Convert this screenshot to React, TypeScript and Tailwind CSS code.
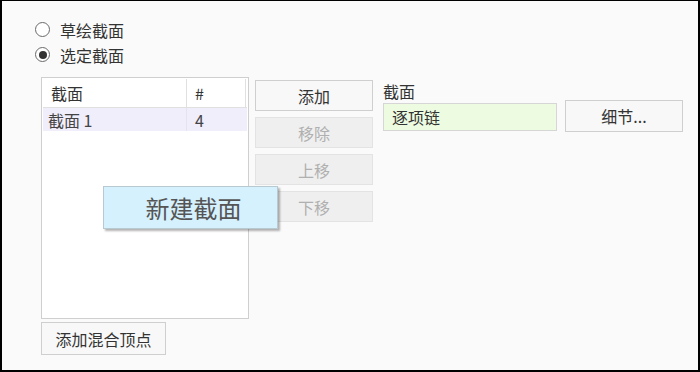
import React from "react";

const font = { fontFamily: '"Noto Sans CJK SC", "Noto Sans", sans-serif' };

function Radio({ label, checked }: { label: string; checked?: boolean }) {
  return (
    <div className="flex items-center h-[25px]">
      <span className="w-[15px] h-[15px] rounded-full border border-[#6a6a6a] bg-white flex items-center justify-center">
        {checked && <span className="w-[8px] h-[8px] rounded-full bg-[#333]" />}
      </span>
      <span className="ml-[10px] text-[16px] text-[#333]">{label}</span>
    </div>
  );
}

function Btn({ label, disabled, className = "" }: { label: string; disabled?: boolean; className?: string }) {
  return (
    <div
      className={
        "flex items-center justify-center border text-[16px] " +
        (disabled
          ? "bg-[#efefef] border-[#e3e3e3] text-[#b0b0b0] "
          : "bg-[#f8f8f8] border-[#cfcfcf] text-[#333] ") +
        className
      }
    >
      {label}
    </div>
  );
}

export default function App() {
  return (
    <div
      style={font}
      className="relative w-[700px] h-[372px] bg-[#fafafa] border-black border-t border-x-2 border-b-2 overflow-hidden"
    >
      <div className="pl-[33px] pt-[16px]">
        <Radio label="草绘截面" />
        <Radio label="选定截面" checked />
      </div>

      <div className="flex items-start pl-[39px] mt-[10px]">
        {/* list + add blend vertex */}
        <div className="flex flex-col">
          <div className="w-[208px] h-[242px] border border-[#cfcfcf] bg-white p-px">
            <div className="flex h-[29px] border-b border-[#e0e0e0] text-[16px] text-[#333]">
              <div className="w-[144px] pl-[8px] flex items-center border-r border-[#e0e0e0]">截面</div>
              <div className="w-[59px] pl-[8px] flex items-center border-r border-[#e0e0e0]">#</div>
            </div>
            <div className="flex h-[23px] bg-[#f1eefc] text-[16px] text-[#444]">
              <div className="w-[144px] pl-[5px] flex items-center border-r border-[#e6e3f0]">截面 1</div>
              <div className="w-[59px] pl-[8px] flex items-center">4</div>
            </div>
          </div>
          <Btn label="添加混合顶点" className="mt-[3px] w-[125px] h-[33px]" />
        </div>

        {/* middle buttons */}
        <div className="flex flex-col gap-[6px] ml-[6px] mt-[3px]">
          <Btn label="添加" className="w-[118px] h-[31px]" />
          <Btn label="移除" disabled className="w-[118px] h-[31px]" />
          <Btn label="上移" disabled className="w-[118px] h-[31px]" />
          <Btn label="下移" disabled className="w-[118px] h-[31px]" />
        </div>

        {/* right side */}
        <div className="ml-[10px] mt-[4px] flex flex-col">
          <div className="text-[16px] text-[#333] leading-[20px]">截面</div>
          <div className="flex items-center">
            <div className="w-[174px] h-[28px] border border-[#d6d6d6] bg-[#edfbe1] flex items-center pl-[8px] text-[16px] text-[#333]">
              逐项链
            </div>
            <Btn label="细节..." className="ml-[8px] -mt-[1px] w-[118px] h-[32px]" />
          </div>
        </div>
      </div>

      {/* tooltip */}
      <div className="absolute left-[101px] top-[185px] w-[175px] h-[43px] bg-[#d5f1fd] border border-[#b9c9d2] shadow-[2px_2px_2px_rgba(0,0,0,0.3)] flex items-center justify-center pl-[6px] text-[24px] text-[#555]">
        新建截面
      </div>
    </div>
  );
}
